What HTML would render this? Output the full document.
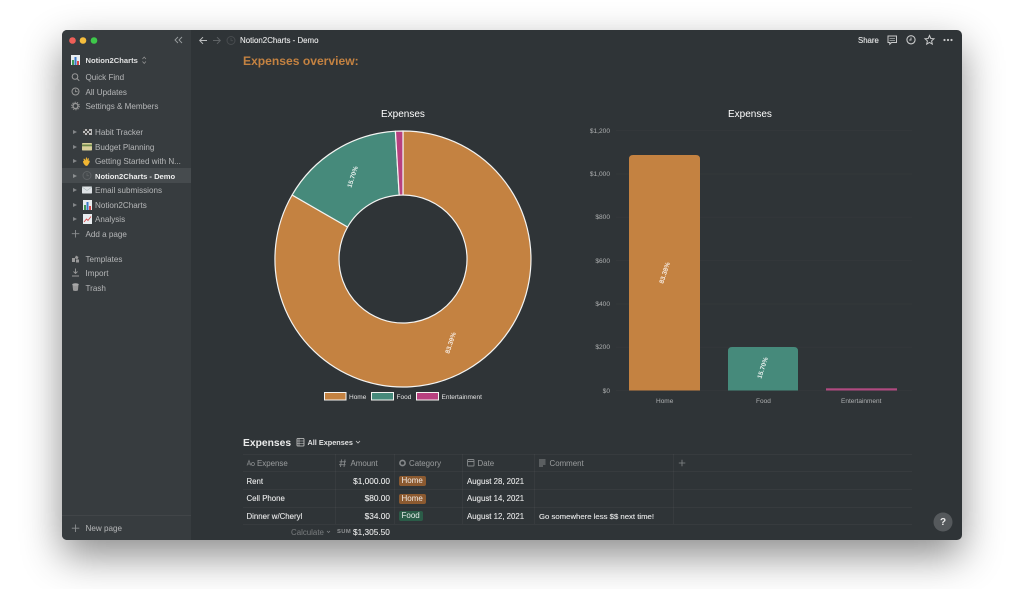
<!DOCTYPE html>
<html><head><meta charset="utf-8"><style>
html,body{margin:0;padding:0;background:#fff;width:1024px;height:589px;overflow:hidden}
body{font-family:"Liberation Sans",sans-serif}
#all{position:absolute;left:0;top:0;width:1024px;height:589px;filter:blur(.3px)}
#w{position:absolute;left:62px;top:30px;width:900px;height:510px;background:#2f3437;border-radius:5px;box-shadow:0 16px 40px rgba(0,0,0,.45)}
#s{position:absolute;left:62px;top:30px;width:129px;height:510px;background:#373c3f;border-radius:5px 0 0 5px}
.t{position:absolute;white-space:nowrap;font-size:8.1px;line-height:10px;color:rgba(255,255,255,.62);margin-top:1px}
.b{font-weight:bold}
.w{color:rgba(255,255,255,.88);font-size:7.85px;-webkit-text-stroke:.1px}
.n{font-size:8.3px;margin-top:0}
.l{position:absolute;background:rgba(255,255,255,.04)}
.tri{position:absolute;width:0;height:0;border-left:4px solid rgba(255,255,255,.38);border-top:2.5px solid transparent;border-bottom:2.5px solid transparent;left:73px}
.tag{position:absolute;height:10px;line-height:10px;font-size:8px;padding:0 3px;border-radius:2px;color:rgba(255,255,255,.88)}
.y{left:570px;width:40px;text-align:right;font-size:6.6px;color:#aeb0b1}
.x{top:395.5px;font-size:6.5px;color:#aeb0b1}
.g{top:392px;font-size:6.5px;color:#e4e4e4}
.h{top:458px;color:rgba(255,255,255,.5);font-size:7.9px}
svg{position:absolute;overflow:visible}
</style></head><body><div id="all">
<div id="w"></div><div id="s"></div>
<div style="position:absolute;left:62px;top:515px;width:129px;height:1px;background:rgba(255,255,255,.05)"></div>
<div style="position:absolute;left:62px;top:168px;width:129px;height:15px;background:#464b4e"></div>

<svg style="left:0;top:0" width="1024" height="589" viewBox="0 0 1024 589" fill="none">
<circle cx="72.5" cy="40.5" r="3.3" fill="#ee5f58"/><circle cx="83" cy="40.5" r="3.3" fill="#f5bd3d"/><circle cx="94" cy="40.5" r="3.3" fill="#3ec84a"/>
<path d="M178 37l-3 3 3 3M182 37l-3 3 3 3" stroke="#9a9d9f" stroke-width=".9"/>
<rect x="71" y="55" width="9" height="10" fill="#e8edf0"/><rect x="72" y="60" width="2" height="5" fill="#3f9a55"/><rect x="74.5" y="57" width="2" height="8" fill="#3a78c8"/><rect x="77" y="61" width="2" height="4" fill="#d84a4a"/>
<path d="M142.500 59l1.700-2 1.700 2M142.500 61.500l1.700 2 1.700-2" stroke="#999" stroke-width=".7"/>
<circle cx="75" cy="76.500" r="2.800" stroke="#999" stroke-width="1"/><path d="M77 78.500l2.300 2.300" stroke="#999" stroke-width="1"/>
<circle cx="75.500" cy="91.500" r="3.500" stroke="#999" stroke-width="1"/><path d="M75.500 89.500v2.200h2" stroke="#999" stroke-width=".8"/>
<circle cx="75.500" cy="106" r="2.500" stroke="#999" stroke-width="1.300"/><circle cx="75.500" cy="106" r="3.800" stroke="#999" stroke-width="1" stroke-dasharray="1.300 1.100"/>
<rect x="83" y="129" width="9" height="6" fill="#bbb"/><path d="M83 129h2v2h-2zM87 129h2v2h-2zM85 131h2v2h-2zM89 131h2v2h-2zM83 133h2v2h-2zM87 133h2v2h-2z" fill="#444"/>
<rect x="82" y="143" width="10" height="7.500" rx=".8" fill="#d8cf9a"/><rect x="82" y="144.500" width="10" height="1.800" fill="#6f8a4a"/>
<path d="M84 164c-1.500-2-1-3.500 0-3l-.5-2c.5-1 1.500 0 2 1.500l.5-3c1-.5 1 1 1 2.500l1-2c1 0 .8 1.500.5 3l1-.5c.8 1-.5 3-1.500 4.500-1 1.500-3 1-4-1z" fill="#f2b632"/>
<circle cx="87" cy="175.500" r="4" stroke="#5e6265" stroke-width="1"/><path d="M87 173v2.700h2" stroke="#5e6265" stroke-width=".8"/>
<rect x="82" y="186.500" width="10" height="7" rx=".6" fill="#dfe3e6"/><path d="M82 187l5 3.500 5-3.500" stroke="#9aa" stroke-width=".5"/>
<rect x="83" y="200" width="9" height="10" fill="#e8edf0"/><rect x="84" y="205" width="2" height="5" fill="#3f9a55"/><rect x="86.500" y="202" width="2" height="8" fill="#3a78c8"/><rect x="89" y="206" width="2" height="4" fill="#d84a4a"/>
<rect x="83" y="214" width="9" height="10" fill="#e8edf0"/><path d="M84 222l2.500-3 1.500 1.500 3-4" stroke="#d84a4a" stroke-width=".9"/>
<path d="M75.500 230v7.500M71.800 233.700h7.500" stroke="#8c8f91" stroke-width=".9"/>
<path d="M72 258h3v3h-3zM76 255.500l2.500 1.500-1.200 2.500-2.500-1.500zM76 259.500h3v3h-3zM72 259h3v3h-3z" fill="#999"/>
<path d="M75.500 268.500v4.500M73.500 271.500l2 2 2-2M72 276h7" stroke="#999" stroke-width=".9"/>
<path d="M72.500 284.500h6l-.6 6c-1.500.7-3.300.7-4.800 0z" fill="#999"/><ellipse cx="75.500" cy="284.500" rx="3.300" ry="1.300" fill="#aaa"/>
<path d="M75.500 524.500v7.500M71.800 528.200h7.500" stroke="#8c8f91" stroke-width=".9"/>
<path d="M207 40.500h-7M203 37.200l-3.300 3.300 3.300 3.300" stroke="#bcbebf" stroke-width="1"/>
<path d="M213 40.500h7M217 37.200l3.300 3.300-3.300 3.300" stroke="#5f6366" stroke-width="1"/>
<circle cx="231" cy="40.500" r="4" stroke="#484c4f" stroke-width="1"/><path d="M231 38v2.700h2" stroke="#484c4f" stroke-width=".8"/>
<path d="M888 36h8.500v6.500h-5l-1.700 1.700v-1.700h-1.800z" stroke="#c8c9ca" stroke-width="1"/><path d="M889.500 38.300h5.500M889.500 40.300h5.500" stroke="#c8c9ca" stroke-width=".6"/>
<circle cx="911" cy="39.800" r="4.100" stroke="#c8c9ca" stroke-width="1.100"/><path d="M911 37.500v2.500h-1.800" stroke="#c8c9ca" stroke-width=".9"/>
<path d="M929.500 35.500l1.300 3 3.200.3-2.400 2.100.7 3.200-2.800-1.700-2.800 1.700.7-3.200-2.400-2.100 3.200-.3z" stroke="#c8c9ca" stroke-width="1"/>
<circle cx="944.500" cy="40" r="1.100" fill="#c8c9ca"/><circle cx="948" cy="40" r="1.100" fill="#c8c9ca"/><circle cx="951.500" cy="40" r="1.100" fill="#c8c9ca"/>

<g stroke="#f4f4f2" stroke-width="1.200" stroke-linejoin="round">
<path d="M403 131A128 128 0 1 1 292.100 195L347.600 227A64 64 0 1 0 403 195Z" fill="#c48241"/>
<path d="M292.100 195A128 128 0 0 1 395.400 131.200L399.200 195.100A64 64 0 0 0 347.600 227Z" fill="#468a7b"/>
<path d="M395.400 131.200A128 128 0 0 1 403 131L403 195A64 64 0 0 0 399.200 195.100Z" fill="#b8407f"/>
</g>
<rect x="324.500" y="392.500" width="21.500" height="7.500" fill="#c48241" stroke="#f4f4f2"/>
<rect x="371.500" y="392.500" width="22" height="7.500" fill="#468a7b" stroke="#f4f4f2"/>
<rect x="416.500" y="392.500" width="22" height="7.500" fill="#b8407f" stroke="#f4f4f2"/>
<g stroke="rgba(255,255,255,.018)" stroke-width="1">
<path d="M616 130.500H912M616 174H912M616 217.300H912M616 260.500H912M616 304H912M616 347.300H912M616 390.500H912"/>
</g>
<path d="M629 390.500V159q0-4 4-4h63q4 0 4 4v231.500z" fill="#c48241"/>
<path d="M728 390.500V351q0-4 4-4h62q4 0 4 4v39.500z" fill="#468a7b"/>
<rect x="826" y="388.300" width="71" height="2.200" fill="#b04a80"/>
<text transform="translate(353,177) rotate(-72)" font-family="Liberation Sans" font-size="6.500" font-weight="bold" fill="#e9f0ee" text-anchor="middle" dominant-baseline="middle">15.70%</text>
<text transform="translate(451,343) rotate(-72)" font-family="Liberation Sans" font-size="6.500" font-weight="bold" fill="#f6eadf" text-anchor="middle" dominant-baseline="middle">83.39%</text>
<text transform="translate(665,273) rotate(-72)" font-family="Liberation Sans" font-size="6.500" font-weight="bold" fill="#f6eadf" text-anchor="middle" dominant-baseline="middle">83.38%</text>
<text transform="translate(763,368) rotate(-72)" font-family="Liberation Sans" font-size="6.500" font-weight="bold" fill="#e9f0ee" text-anchor="middle" dominant-baseline="middle">15.70%</text>
<path d="M247 465.500l2-5 2 5M247.700 464h2.600" stroke="#85888a" stroke-width=".7"/><circle cx="253" cy="464" r="1.500" stroke="#85888a" stroke-width=".7"/>
<path d="M341.500 459.500l-1 7.500M345 459.500l-1 7.500M339.500 461.800h6.500M339 464.700h6.500" stroke="#85888a" stroke-width=".9"/>
<circle cx="402.500" cy="463" r="2.600" stroke="#85888a" stroke-width="1.600"/>
<rect x="467.500" y="459.500" width="6.500" height="6.500" rx=".8" stroke="#85888a" stroke-width=".9"/><path d="M467.500 461.500h6.500" stroke="#85888a" stroke-width="1"/>
<path d="M539 460h6.500M539 462h6.500M539 464h6.500M539 466h4" stroke="#85888a" stroke-width=".9"/>
<path d="M682 459.800v6.500M678.800 463h6.500" stroke="#85888a" stroke-width=".8"/>
<rect x="297" y="438.500" width="7" height="7.500" rx=".6" stroke="#ccc" stroke-width=".8"/><path d="M299 438.500v7.500M297 441h7M297 443.500h7" stroke="#ccc" stroke-width=".6"/>
<path d="M356 441l2 2 2-2" stroke="#ccc" stroke-width=".8"/>
<path d="M327 531l1.500 1.500 1.500-1.500" stroke="#85888a" stroke-width=".7"/>
<circle cx="943" cy="522" r="9.500" fill="#55595c"/>
</svg>

<div class="t b" style="left:85.500px;top:55px;color:rgba(255,255,255,.85);font-size:7.600px">Notion2Charts</div>
<div class="t" style="left:85.500px;top:72px">Quick Find</div>
<div class="t" style="left:85.500px;top:87px">All Updates</div>
<div class="t" style="left:85.500px;top:101px">Settings &amp; Members</div>

<div class="tri" style="top:130px"></div><div class="t" style="left:95px;top:127px">Habit Tracker</div>
<div class="tri" style="top:144.500px"></div><div class="t" style="left:95px;top:142px">Budget Planning</div>
<div class="tri" style="top:159px"></div><div class="t" style="left:95px;top:156px">Getting Started with N...</div>
<div class="tri" style="top:173.500px"></div><div class="t b" style="left:95px;top:171px;color:rgba(255,255,255,.9);font-size:7.600px">Notion2Charts - Demo</div>
<div class="tri" style="top:188px"></div><div class="t" style="left:95px;top:185px">Email submissions</div>
<div class="tri" style="top:202.500px"></div><div class="t" style="left:95px;top:200px">Notion2Charts</div>
<div class="tri" style="top:217px"></div><div class="t" style="left:95px;top:214px">Analysis</div>
<div class="t" style="left:85.500px;top:229px">Add a page</div>
<div class="t" style="left:85.500px;top:254px">Templates</div>
<div class="t" style="left:85.500px;top:268px">Import</div>
<div class="t" style="left:85.500px;top:283px">Trash</div>
<div class="t" style="left:85.500px;top:523px">New page</div>

<div class="t w" style="left:240px;top:35px;font-size:7.900px">Notion2Charts - Demo</div>
<div class="t w" style="left:858px;top:35px;font-size:7.800px">Share</div>
<div class="t b" style="left:243px;top:53px;font-size:12.100px;line-height:15px;color:#c48241">Expenses overview:</div>

<div class="t" style="left:381px;top:108px;font-size:10px;line-height:12px;color:#fff">Expenses</div>
<div class="t" style="left:728px;top:108px;font-size:10px;line-height:12px;color:#fff">Expenses</div>
<div class="t g" style="left:349px">Home</div>
<div class="t g" style="left:396.500px">Food</div>
<div class="t g" style="left:441.500px">Entertainment</div>

<div class="t y" style="top:126px">$1,200</div>
<div class="t y" style="top:169px">$1,000</div>
<div class="t y" style="top:212px">$800</div>
<div class="t y" style="top:256px">$600</div>
<div class="t y" style="top:299px">$400</div>
<div class="t y" style="top:342px">$200</div>
<div class="t y" style="top:386px">$0</div>
<div class="t x" style="left:656px">Home</div>
<div class="t x" style="left:756px">Food</div>
<div class="t x" style="left:841px">Entertainment</div>

<div class="t b" style="left:243px;top:436px;font-size:10.300px;line-height:13px;color:rgba(255,255,255,.9)">Expenses</div>
<div class="t b" style="left:307.500px;top:436.500px;font-size:7.300px;color:rgba(255,255,255,.85)">All Expenses</div>

<div class="l" style="left:243px;top:454px;width:669px;height:1px"></div>
<div class="l" style="left:243px;top:471px;width:669px;height:1px"></div>
<div class="l" style="left:243px;top:489px;width:669px;height:1px"></div>
<div class="l" style="left:243px;top:507px;width:669px;height:1px"></div>
<div class="l" style="left:243px;top:524px;width:669px;height:1px"></div>
<div class="l" style="left:335px;top:454px;width:1px;height:70px"></div>
<div class="l" style="left:394px;top:454px;width:1px;height:70px"></div>
<div class="l" style="left:462px;top:454px;width:1px;height:70px"></div>
<div class="l" style="left:534px;top:454px;width:1px;height:70px"></div>
<div class="l" style="left:673px;top:454px;width:1px;height:70px"></div>

<div class="t h" style="left:257px">Expense</div>
<div class="t h" style="left:350.500px">Amount</div>
<div class="t h" style="left:409px">Category</div>
<div class="t h" style="left:477.500px">Date</div>
<div class="t h" style="left:549.500px">Comment</div>

<div class="t w" style="left:246.500px;top:476px">Rent</div>
<div class="t w" style="left:246.500px;top:493px">Cell Phone</div>
<div class="t w" style="left:246.500px;top:511px">Dinner w/Cheryl</div>
<div class="t w n" style="left:330px;width:60px;text-align:right;top:476px">$1,000.00</div>
<div class="t w n" style="left:330px;width:60px;text-align:right;top:493px">$80.00</div>
<div class="t w n" style="left:330px;width:60px;text-align:right;top:511px">$34.00</div>
<div class="tag" style="left:398.500px;top:476px;background:#8c5a30">Home</div>
<div class="tag" style="left:398.500px;top:493.500px;background:#8c5a30">Home</div>
<div class="tag" style="left:398.500px;top:511px;background:#2b5c48">Food</div>
<div class="t w" style="left:467px;top:476px">August 28, 2021</div>
<div class="t w" style="left:467px;top:493px">August 14, 2021</div>
<div class="t w" style="left:467px;top:511px">August 12, 2021</div>
<div class="t w" style="left:539px;top:511px;font-size:7.760px">Go somewhere less $$ next time!</div>

<div class="t" style="left:291px;top:526.500px;color:rgba(255,255,255,.35);font-size:7.900px">Calculate</div>
<div class="t" style="left:337px;top:526px;font-size:5.800px;font-weight:bold;letter-spacing:.4px;color:rgba(255,255,255,.45)">SUM</div>
<div class="t w n" style="left:353px;top:527px">$1,305.50</div>
<div class="t b" style="left:940px;top:515.500px;font-size:10px;line-height:12px;color:#eee">?</div>
</div></body></html>
